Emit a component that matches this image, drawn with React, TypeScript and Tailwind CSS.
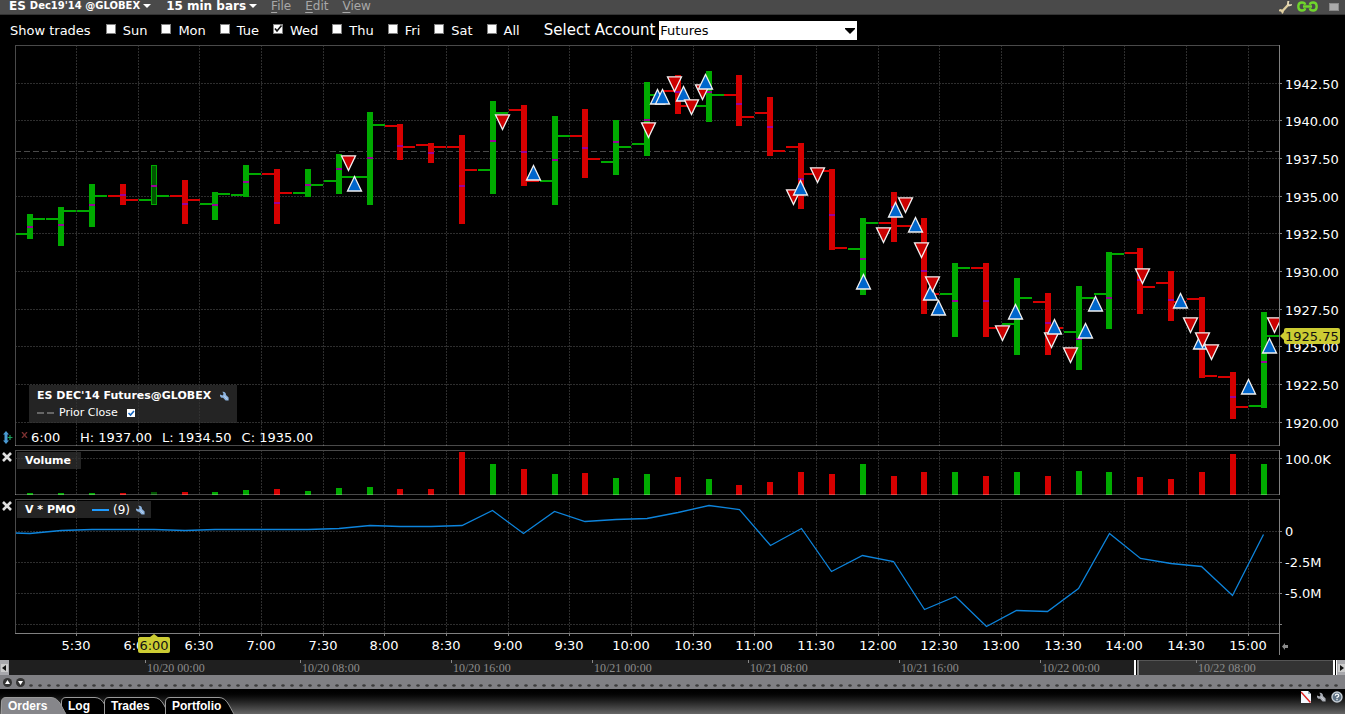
import React from "react";

const BAR_X = [
  27, 58, 89, 120, 151, 182, 212, 243, 274, 305, 336, 367, 397, 428, 459, 490, 521, 552, 582, 613, 644, 675, 706, 736,
  767, 798, 829, 860, 891, 921, 952, 983, 1014, 1045, 1076, 1106, 1137, 1168, 1199, 1230, 1261,
];

type Tone = "up" | "down" | "picked";

// tone, high, low, open, close, midpoint, volume top
const BARS: [Tone, number, number, number, number, number, number][] = [
  ["up", 214, 239, 233, 218, 226, 493],
  ["up", 207, 246, 218, 210, 224, 493],
  ["up", 184, 227, 210, 195, 204, 493],
  ["down", 184, 205, 195, 199, 194, 493],
  ["picked", 165, 205, 199, 195, 185, 492],
  ["down", 180, 224, 195, 199, 203, 492],
  ["up", 192, 220, 203, 193, 204, 492],
  ["up", 165, 197, 194, 173, 181, 490],
  ["down", 169, 224, 173, 192, 202, 489],
  ["up", 169, 197, 192, 184, 184, 491],
  ["up", 154, 194, 180, 176, 168, 488],
  ["up", 112, 205, 176, 124, 157, 487],
  ["down", 124, 160, 125, 146, 145, 489],
  ["down", 143, 163, 144, 146, 152, 489],
  ["down", 135, 224, 146, 169, 185, 452],
  ["up", 101, 194, 169, 112, 140, 464],
  ["down", 105, 186, 109, 180, 151, 469],
  ["up", 116, 205, 180, 135, 159, 474],
  ["down", 109, 178, 135, 158, 147, 473],
  ["up", 120, 175, 161, 146, 141, 478],
  ["up", 82, 156, 143, 94, 119, 474],
  ["down", 75, 114, 90, 105, 91, 477],
  ["up", 71, 122, 105, 94, 91, 479],
  ["down", 75, 126, 94, 116, 103, 485],
  ["down", 97, 156, 112, 150, 126, 482],
  ["down", 143, 209, 146, 173, 178, 472],
  ["down", 169, 250, 170, 247, 214, 474],
  ["up", 218, 295, 248, 222, 258, 464],
  ["down", 192, 242, 222, 225, 206, 476],
  ["down", 218, 314, 225, 293, 270, 472],
  ["up", 263, 337, 293, 267, 300, 472],
  ["down", 263, 337, 267, 327, 300, 476],
  ["up", 278, 355, 323, 297, 312, 472],
  ["down", 293, 355, 301, 327, 322, 476],
  ["up", 286, 370, 331, 297, 338, 471],
  ["up", 252, 329, 293, 253, 297, 472],
  ["down", 248, 314, 252, 286, 279, 477],
  ["down", 271, 321, 282, 301, 299, 479],
  ["down", 297, 378, 298, 375, 335, 472],
  ["down", 372, 419, 376, 406, 396, 454],
  ["up", 312, 408, 405, 335, 361, 464],
];

// side, centre x, top y
const TRADES: ["sell" | "buy", number, number][] = [
  ["sell", 348, 155], ["buy", 354, 175], ["sell", 502, 114], ["buy", 533, 164], ["sell", 648, 122],
  ["buy", 657, 88], ["buy", 662, 88], ["sell", 674, 76], ["buy", 683, 85], ["sell", 691, 99],
  ["sell", 702, 84], ["buy", 705, 73], ["sell", 793, 189], ["buy", 800, 179], ["sell", 817, 167],
  ["buy", 863, 273], ["sell", 883, 227], ["buy", 895, 201], ["sell", 905, 197], ["buy", 915, 216],
  ["sell", 921, 242], ["buy", 930, 284], ["sell", 932, 276], ["buy", 938, 299], ["sell", 1002, 325],
  ["buy", 1015, 303], ["sell", 1051, 332], ["buy", 1054, 318], ["sell", 1070, 347], ["buy", 1085, 322],
  ["buy", 1095, 295], ["sell", 1142, 268], ["buy", 1180, 292], ["sell", 1190, 317], ["buy", 1200, 333],
  ["sell", 1202, 332], ["sell", 1211, 344], ["buy", 1248, 378], ["buy", 1269, 337], ["sell", 1274, 317],
];

const PMO =
  "15,533 30,533.5 61,530.5 92,529.5 154,529.5 185,530.5 215,529.5 308,529.5 339,528.5 370,525.5 400,526.5 431,526.5 462,525.5 492.5,510.5 523.5,533.5 554.5,511.5 585,521.5 616,519.5 647,518.5 678,512.5 709,505.5 739.5,509.5 770.5,545.5 801.5,528.5 831.5,571.5 862.5,555.5 893.5,561.5 924.5,609.5 955.5,596.5 986.5,626.5 1016.5,610.5 1047.5,611.5 1078.5,588.5 1109.5,533.5 1140.5,558.5 1171,563.5 1201.5,566.5 1232.5,595.5 1263.5,534.5";

const TIMES: [string, number][] = [
  ["5:30", 76], ["6:00", 138], ["6:30", 199], ["7:00", 261], ["7:30", 323], ["8:00", 384], ["8:30", 446],
  ["9:00", 508], ["9:30", 569], ["10:00", 631], ["10:30", 693], ["11:00", 754], ["11:30", 816], ["12:00", 878],
  ["12:30", 939], ["13:00", 1001], ["13:30", 1063], ["14:00", 1124], ["14:30", 1186], ["15:00", 1248],
];

const PRICES: [string, number][] = [
  ["1942.50", 83], ["1940.00", 120], ["1937.50", 158], ["1935.00", 196], ["1932.50", 233],
  ["1930.00", 271], ["1927.50", 309], ["1925.00", 346], ["1922.50", 384], ["1920.00", 422],
];

const DAYS: [string, number][] = [
  ["10/20 00:00", 145], ["10/20 08:00", 300], ["10/20 16:00", 451], ["10/21 00:00", 592],
  ["10/21 08:00", 748], ["10/21 16:00", 899], ["10/22 00:00", 1040], ["10/22 08:00", 1196],
];

const FILL = { up: "#00aa00", down: "#d60000", picked: "#005500" };
const PLOT_LEFT = 15;
const PLOT_WIDTH = 1265;

const pct = (x: number, left: number, width: number) => `${((x - left) / width) * 100}%`;

function Frame({ top, height, rows, heavy, children }: {
  top: number; height: number; rows: number[]; heavy?: boolean; children: React.ReactNode;
}) {
  return (
    <svg
      className="block w-full"
      height={height}
      viewBox={`${PLOT_LEFT} ${top} ${PLOT_WIDTH} ${height}`}
      preserveAspectRatio="none"
      aria-hidden="true"
    >
      <g stroke="#2e2e2e" strokeDasharray="2 1" shapeRendering="crispEdges">
        {TIMES.map(([, x]) => <line key={x} x1={x + 0.5} x2={x + 0.5} y1={top} y2={top + height} />)}
        {rows.map((y) => <line key={y} x1={15} x2={1279} y1={y + 0.5} y2={y + 0.5} />)}
      </g>
      {children}
      <g shapeRendering="crispEdges">
        <rect x={15} y={top} width={1265} height={1} fill="#4a4a4a" />
        <rect x={15} y={top} width={1} height={height} fill="#4a4a4a" />
        <rect x={15} y={top + height - 1} width={1265} height={1} fill={heavy ? "#808080" : "rgba(255,255,255,0.29)"} />
        <rect x={1279} y={top} width={1} height={height} fill="#808080" />
      </g>
    </svg>
  );
}

function Axis({ top, height, marks, children }: {
  top: number; height: number; marks: [string, number, number][]; children?: React.ReactNode;
}) {
  return (
    <svg className="block w-full text-[13px]" height={height} overflow="visible">
      {marks.map(([label, y, drop]) => (
        <React.Fragment key={y}>
          <rect x={0} y={y - top} width={2} height={1} fill="#808080" />
          <text x={5} y={y - top + drop} fill="#ffffff">{label}</text>
        </React.Fragment>
      ))}
      {children}
    </svg>
  );
}

function Wrench({ className }: { className: string }) {
  return (
    <svg className={className} viewBox="0 0 10 10" width="10" height="10" aria-hidden="true">
      <path d="M3.4.8 4.6 3 3.6 4.4 1 3.4C.6 5.4 2 7 4 6.8L6.6 9.6H9.6V6.4L7 4C7.2 1.8 5.6.4 3.4.8Z" fill="currentColor" />
      <path d="M5.2 5 8.4 8.2" stroke="#ffffff" strokeWidth="1" opacity=".5" />
    </svg>
  );
}

function CloseMark() {
  return (
    <svg width="10" height="10" viewBox="0 0 10 10" aria-hidden="true">
      <path d="M1 1 9 9M9 1 1 9" stroke="#e0e0e0" strokeWidth="2.6" />
    </svg>
  );
}

function DayBox({ label, on }: { label: string; on?: boolean }) {
  return (
    <label className="flex items-center gap-[7px]">
      <span className="relative -top-px flex">
        <input type="checkbox" defaultChecked={on} className="peer size-[10px] appearance-none border border-[#808080] bg-white" />
        <svg className="pointer-events-none absolute inset-0 opacity-0 peer-checked:opacity-100" width="10" height="10" viewBox="0 0 10 10" aria-hidden="true">
          <path d="M2 4.5 4 7 8.5 1.5" fill="none" stroke="#111" strokeWidth="1.6" />
        </svg>
      </span>
      {label}
    </label>
  );
}

function Tab({ label, width, active, className }: { label: string; width: number; active?: boolean; className: string }) {
  return (
    <button className={`relative h-[17px] pt-px text-left text-xs font-bold leading-none ${className}`}>
      <svg className="absolute inset-0 size-full" viewBox={`0 0 ${width} 17`} preserveAspectRatio="none" aria-hidden="true">
        <path
          d={`M.5 18V5Q.5.5 5 .5H${width - 16}Q${width - 10} .5 ${width - 6} 8T${width - 0.5} 18`}
          fill={active ? "#86868a" : "#000"}
          stroke="#9a9a9a"
        />
      </svg>
      <span className="relative">{label}</span>
    </button>
  );
}

export default function App() {
  return (
    <div className="flex min-h-screen flex-col overflow-hidden bg-black font-['DejaVu_Sans',sans-serif] text-[13px] text-white">
      <header className="flex h-[15px] items-center border-b border-[#333] bg-[#4a4a4a] pl-[9px] pr-[6px] leading-none">
        <button className="-mt-[2px] flex items-center font-bold">
          <span className="text-[12px]">ES</span>
          <span className="ml-[4px] text-[10px]">Dec19'14 @GLOBEX</span>
          <svg className="ml-[3px]" width="8" height="4" aria-hidden="true"><path d="M0 0H8L4 4Z" fill="#fff" /></svg>
        </button>
        <button className="-mt-[2px] ml-[15px] flex items-center gap-[3px] text-[12px] font-bold">
          15 min bars
          <svg width="8" height="4" aria-hidden="true"><path d="M0 0H8L4 4Z" fill="#fff" /></svg>
        </button>
        <nav className="-mt-[2px] ml-[14px] flex gap-[14px] text-[12px] text-[#a8a8a8]">
          <button><u className="underline-offset-2">F</u>ile</button>
          <button><u className="underline-offset-2">E</u>dit</button>
          <button><u className="underline-offset-2">V</u>iew</button>
        </nav>
        <div className="ml-auto flex items-center gap-[5px]">
          <svg width="13" height="13" viewBox="0 0 13 13" aria-hidden="true">
            <path d="M3.5 10 9.5 3.5" stroke="#e0cfa0" strokeWidth="2.4" />
            <path d="M8.4 0 8 3.4 9.8 5.4 12.8 4.6 13 3 10.6 3.4 9.8 2.4 10.4 0Z" fill="#e8dcb8" />
            <path d="M0 9 1 8 3 8.6 4.8 10 4.4 12 3 13 2.6 11.4 1.6 10.4 0 10.2Z" fill="#e0cfa0" />
          </svg>
          <svg className="-mt-px" width="21" height="11" viewBox="0 0 21 11" fill="none" stroke="#6fd52c" strokeWidth="2.4" aria-hidden="true">
            <path d="M8.2 3.8C7.6 .8 2 .4 1.4 4.5V6.5C2 10.6 7.6 10.2 8.2 7.2M12.8 3.8C13.4 .8 19 .4 19.6 4.5V6.5C19 10.6 13.4 10.2 12.8 7.2M6 5.5H15" />
          </svg>
          <span className="-mt-px ml-[6px] h-[8px] w-[10px] border border-[#8a8a8a] bg-[#aaa]" />
        </div>
      </header>

      <div className="flex h-[30px] items-center gap-[14px] pl-[10px] leading-none">
        <span className="mr-px">Show trades</span>
        <DayBox label="Sun" />
        <DayBox label="Mon" />
        <DayBox label="Tue" />
        <DayBox label="Wed" on />
        <DayBox label="Thu" />
        <DayBox label="Fri" />
        <DayBox label="Sat" />
        <DayBox label="All" />
        <label className="ml-[10px] flex items-center gap-[4px] text-[15px]">
          Select Account
          <span className="relative flex">
            <select defaultValue="Futures" className="h-[19px] w-[198px] appearance-none bg-white pl-px text-[13px] leading-none text-black">
              <option>Futures</option>
            </select>
            <svg className="pointer-events-none absolute right-[2px] top-[7px]" width="10" height="6" aria-hidden="true">
              <path d="M0 0H10V1L5 6 0 1Z" fill="#000" />
            </svg>
          </span>
        </label>
      </div>

      <main className="grid grid-cols-[15px_minmax(0,1fr)_65px] gap-y-[4px]">
        <div className="flex items-end justify-center pb-[2px]">
          <svg width="11" height="13" viewBox="0 0 11 13" aria-hidden="true">
            <path d="M4 0 7 3.5H5.5V9.5H7L4 13 1 9.5H2.5V3.5H1Z" fill="#4a9ad4" />
            <path d="M5.5 6.5H10.5M8 4V9" stroke="#19a05a" strokeWidth="1.2" />
          </svg>
        </div>
        <section className="relative" aria-label="Price">
          <Frame top={45} height={401} rows={PRICES.map(([, y]) => y)}>
            <line x1={15} x2={1279} y1={151.5} y2={151.5} stroke="#4a4a4a" strokeDasharray="6 3" />
            <g shapeRendering="crispEdges">
              {BARS.map(([tone, high, low, open, close, mid], i) => {
                const x = BAR_X[i];
                const line = tone === "down" ? FILL.down : FILL.up;
                return (
                  <g key={x} fill={line}>
                    <rect x={x - 12} y={open} width={12} height={2} />
                    <rect x={x + 6} y={close} width={12} height={2} />
                    <rect x={x} y={high} width={6} height={low - high} />
                    {tone === "picked" && <rect x={x + 1} y={high + 1} width={4} height={low - high - 2} fill={FILL.picked} />}
                    <rect x={x} y={mid} width={6} height={2} fill="#990099" />
                  </g>
                );
              })}
            </g>
            <g stroke="#f0f0f0" strokeWidth={1.3}>
              {TRADES.map(([side, x, y]) =>
                side === "sell" ? (
                  <path key={`${x}-${y}`} d={`M${x - 6.5} ${y + 0.8}H${x + 7.5}L${x + 0.5} ${y + 15.5}Z`} fill="#cc0000" />
                ) : (
                  <path key={`${x}-${y}`} d={`M${x - 6.5} ${y + 16}H${x + 7.5}L${x + 0.5} ${y + 1.5}Z`} fill="#0066cc" />
                )
              )}
            </g>
          </Frame>
          <div className="absolute bottom-0 left-[6px] leading-none">
            <div className="ml-[8px] flex h-[38px] w-[208px] flex-col justify-center gap-[6px] bg-[#333]/70 px-[8px] text-[11px]">
              <div className="flex items-center justify-between whitespace-nowrap font-bold">
                ES DEC'14 Futures@GLOBEX
                <Wrench className="text-[#8db4e0]" />
              </div>
              <label className="flex items-center gap-[5px]">
                <svg width="17" height="2" aria-hidden="true"><path d="M0 1H7M10 1H17" stroke="#666" strokeWidth="2" /></svg>
                Prior Close
                <span className="relative ml-[4px] flex">
                  <input type="checkbox" defaultChecked className="peer size-[8px] appearance-none bg-white" />
                  <svg className="pointer-events-none absolute inset-0 opacity-0 peer-checked:opacity-100" width="8" height="8" aria-hidden="true">
                    <path d="M1.5 4 3.5 6 7 2" fill="none" stroke="#1565c0" strokeWidth="1.6" />
                  </svg>
                </span>
              </label>
            </div>
            <div className="flex h-[23px] items-center whitespace-pre pt-[5px]">
              <svg className="mr-[3px] mb-[4px]" width="7" height="6" aria-hidden="true"><path d="M1 0 6 6M6 0 1 6" stroke="#7a3030" strokeWidth="1.3" /></svg>
              <span className="w-[49px]">6:00</span>
              <span>H: 1937.00</span>
              <span className="ml-[10px]">L: 1934.50</span>
              <span className="ml-[10px]">C: 1935.00</span>
            </div>
          </div>
        </section>
        <Axis top={45} height={401} marks={PRICES.map(([label, y]) => [label, y, 6])}>
          <path d="M0 291 4 287V285Q4 283 6 283H58Q60 283 60 285V297Q60 299 58 299H6Q4 299 4 297V295Z" fill="#cccc33" />
          <text x={5} y={296} fill="#111">1925.75</text>
        </Axis>

        <button className="flex items-start pl-[2px] pt-[2px]" aria-label="Close volume"><CloseMark /></button>
        <section className="relative" aria-label="Volume">
          <Frame top={450} height={45} rows={[458]}>
            <g shapeRendering="crispEdges">
              {BARS.map((bar, i) => (
                <rect key={i} x={BAR_X[i]} y={bar[6]} width={6} height={495 - bar[6]} fill={FILL[bar[0]]} />
              ))}
            </g>
          </Frame>
          <h2 className="absolute left-[2px] top-[2px] flex h-[17px] w-[64px] items-center bg-[#333]/70 pl-[8px] text-[11px] font-bold leading-none">Volume</h2>
        </section>
        <Axis top={450} height={45} marks={[["100.0K", 458, 6]]} />

        <button className="flex items-start pl-[2px] pt-[2px]" aria-label="Close PMO"><CloseMark /></button>
        <section className="relative" aria-label="PMO">
          <Frame top={499} height={135} rows={[531, 562, 593, 624]} heavy>
            <polyline points={PMO} fill="none" stroke="#0d84dc" strokeWidth={1.3} />
          </Frame>
          <div className="absolute left-[2px] top-[2px] flex h-[17px] w-[134px] items-center bg-[#333]/70 pl-[8px] text-[11px] leading-none">
            <b>V * PMO</b>
            <span className="ml-auto h-[2px] w-[17px] bg-[#1e9bff]" />
            <span className="ml-[4px] mr-[5px] text-[12px]">(9)</span>
            <Wrench className="mr-[6px] text-[#8db4e0]" />
          </div>
        </section>
        <Axis top={499} height={135} marks={[["0", 531, 5], ["-2.5M", 562, 5], ["-5.0M", 593, 5], ["", 624, 5]]} />

        <svg className="col-start-2 -mt-[4px] block w-full text-[13px]" height="26" textAnchor="middle">
          {TIMES.map(([label, x]) => (
            <React.Fragment key={x}>
              <rect x={pct(x, PLOT_LEFT, PLOT_WIDTH)} y={0} width={1} height={2} fill="#808080" />
              <text x={pct(x, PLOT_LEFT, PLOT_WIDTH)} y={16} fill="#fff">{label}</text>
            </React.Fragment>
          ))}
          <svg x={pct(138, PLOT_LEFT, PLOT_WIDTH)} y={0} width={32} height={20}>
            <path d="M2 3H12L16 0 20 3H30Q32 3 32 5V17Q32 19 30 19H2Q0 19 0 17V5Q0 3 2 3Z" fill="#cccc33" />
            <text x={16} y={16} fill="#111">6:00</text>
          </svg>
          <rect x={pct(1279, PLOT_LEFT, PLOT_WIDTH)} y={0} width={1} height={21} fill="#808080" />
        </svg>
        <svg className="-mt-[4px]" width="10" height="26" aria-hidden="true">
          <path d="M2 12.5 5 9V11H8V14H5V16Z" fill="#8a8a8a" />
        </svg>
      </main>

      <div className="flex h-[15px]">
        <button className="flex w-[9px] items-center justify-center bg-[#a8a8ac]" aria-label="Scroll back">
          <svg width="7" height="8"><rect width="7" height="8" fill="#ccc" /><path d="M5 1V7L1 4Z" fill="#111" /></svg>
        </button>
        <svg className="h-full min-w-0 flex-1 bg-[#1f1f1f] font-['Liberation_Serif',serif] text-[12px]">
          <rect x={pct(1139, 9, 1328)} y={0} width={pct(1203, 9, 1328)} height={15} fill="#333" />
          <rect x={pct(1139, 9, 1328)} y={0} width={pct(1203, 9, 1328)} height={1} fill="#555" />
          {DAYS.map(([label, x]) => (
            <React.Fragment key={x}>
              <rect x={pct(x, 9, 1328)} y={0} width={1} height={3} fill="#888" />
              <text x={pct(x + 2, 9, 1328)} y={12} fill="#8c8c8c">{label}</text>
            </React.Fragment>
          ))}
          <svg x={pct(1134, 9, 1328)} y={0} width={5} height={15}>
            <rect width={5} height={15} fill="#888" /><rect width={3} height={15} fill="#fff" /><rect x={2} width={1} height={15} fill="#000" />
          </svg>
          <svg x={pct(1333, 9, 1328)} y={0} width={4} height={15}>
            <rect width={4} height={15} fill="#fff" /><rect x={2} width={1} height={15} fill="#000" />
          </svg>
        </svg>
        <button className="flex w-[8px] items-center justify-center bg-[#a8a8ac]" aria-label="Scroll forward">
          <svg width="7" height="8"><rect width="7" height="8" fill="#ccc" /><path d="M2 1V7L6 4Z" fill="#111" /></svg>
        </button>
      </div>

      <div className="flex h-[14px] items-center gap-[4px] bg-[#808084] pl-[3px] pr-[6px]">
        <svg width="9" height="9" aria-hidden="true"><circle cx="4.5" cy="4.5" r="4.5" fill="#333" /><path d="M4.5 2 7 6H2Z" fill="#fff" /></svg>
        <svg width="9" height="9" aria-hidden="true"><circle cx="4.5" cy="4.5" r="4.5" fill="#333" /><path d="M4.5 7 7 3H2Z" fill="#fff" /></svg>
        <svg className="h-full min-w-0 flex-1" aria-hidden="true">
          <defs>
            <pattern id="grip" width="9" height="14" patternUnits="userSpaceOnUse">
              <ellipse cx="2" cy="10.5" rx="1.8" ry="1.3" fill="#3c3c3c" />
            </pattern>
          </defs>
          <rect width="100%" height="14" fill="url(#grip)" />
        </svg>
      </div>

      <footer className="flex h-[25px] items-start justify-between bg-linear-to-b from-black to-[#666] font-['Liberation_Sans',sans-serif]">
        <div className="flex pl-px pt-[8px]">
          <Tab label="Orders" width={66} active className="z-10 w-[66px] pl-[7px]" />
          <Tab label="Log" width={50} className="-ml-[6px] w-[50px] pl-[7px]" />
          <Tab label="Trades" width={66} className="-ml-[7px] w-[66px] pl-[7px]" />
          <Tab label="Portfolio" width={70} className="-ml-[5px] w-[70px] pl-[7px]" />
        </div>
        <div className="flex items-center gap-[5px] pr-[2px] pt-[2px]">
          <svg width="10" height="12" aria-hidden="true">
            <path d="M0 0H7L10 3V12H0Z" fill="#f4f8ff" /><path d="M7 0V3H10" fill="#9ab" />
            <path d="M0 1 9.5 11.5" stroke="#e02020" strokeWidth="1.5" />
          </svg>
          <Wrench className="text-[#a8acb4]" />
          <svg width="12" height="12" viewBox="0 0 12 12" fill="none" aria-hidden="true">
            <circle cx="6" cy="6" r="5" fill="#5f7284" stroke="#c4ccd4" strokeWidth="1.4" />
            <path d="M4.2 4.7Q4.4 3.1 6 3.1T7.8 4.7Q7.8 5.6 6 6.4V7.2M6 8V9.3" stroke="#fff" strokeWidth="1.2" />
          </svg>
        </div>
      </footer>
    </div>
  );
}
